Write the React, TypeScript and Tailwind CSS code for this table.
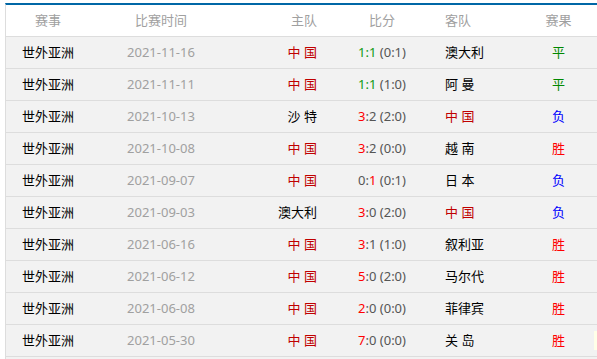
import React from "react";

type Row = {
  date: string;
  home: string;
  hs: string;
  as: string;
  ht: string;
  away: string;
  res: "平" | "负" | "胜";
  win: "h" | "a" | "d";
};

const rows: Row[] = [
  { date: "2021-11-16", home: "中 国", hs: "1", as: "1", ht: "(0:1)", away: "澳大利", res: "平", win: "d" },
  { date: "2021-11-11", home: "中 国", hs: "1", as: "1", ht: "(1:0)", away: "阿 曼", res: "平", win: "d" },
  { date: "2021-10-13", home: "沙 特", hs: "3", as: "2", ht: "(2:0)", away: "中 国", res: "负", win: "h" },
  { date: "2021-10-08", home: "中 国", hs: "3", as: "2", ht: "(0:0)", away: "越 南", res: "胜", win: "h" },
  { date: "2021-09-07", home: "中 国", hs: "0", as: "1", ht: "(0:1)", away: "日 本", res: "负", win: "a" },
  { date: "2021-09-03", home: "澳大利", hs: "3", as: "0", ht: "(2:0)", away: "中 国", res: "负", win: "h" },
  { date: "2021-06-16", home: "中 国", hs: "3", as: "1", ht: "(1:0)", away: "叙利亚", res: "胜", win: "h" },
  { date: "2021-06-12", home: "中 国", hs: "5", as: "0", ht: "(2:0)", away: "马尔代", res: "胜", win: "h" },
  { date: "2021-06-08", home: "中 国", hs: "2", as: "0", ht: "(0:0)", away: "菲律宾", res: "胜", win: "h" },
  { date: "2021-05-30", home: "中 国", hs: "7", as: "0", ht: "(0:0)", away: "关 岛", res: "胜", win: "h" },
];

const font = { fontFamily: '"Noto Sans", "Noto Sans CJK SC", sans-serif' };

function teamClass(name: string) {
  return name === "中 国" ? "text-[#c00000]" : "text-black";
}

function resClass(r: string) {
  if (r === "平") return "text-[#008800]";
  if (r === "负") return "text-[#0000ff]";
  return "text-[#ff0000]";
}

export default function App() {
  return (
    <div className="relative w-[597px] h-[359px] overflow-hidden bg-white text-[13px]" style={font}>
      <div className="mt-[3px] ml-[5px] border-t-2 border-t-[#0067a6] border-l border-l-[#dddddd] bg-[#f2f2f2] h-[360px]">
        <div className="flex h-[32px] items-center border-b border-b-[#dddddd] bg-white text-[#a0a0a0]">
          <div className="w-[84px] text-center">赛事</div>
          <div className="w-[142px] text-center">比赛时间</div>
          <div className="w-[95px] text-right pr-[10px]">主队</div>
          <div className="w-[110px] text-center">比分</div>
          <div className="w-[83px] pl-[8px]">客队</div>
          <div className="flex-1 text-center">赛果</div>
        </div>
        {rows.map((r, i) => (
          <div key={i} className="flex h-[32px] items-center border-b border-b-[#dddddd] bg-[#f2f2f2]">
            <div className="w-[84px] text-center text-black">世外亚洲</div>
            <div className="w-[142px] text-center text-[#a0a0a0]">{r.date}</div>
            <div className={"w-[95px] text-right pr-[10px] " + teamClass(r.home)}>{r.home}</div>
            <div className="w-[110px] text-center text-[#555555]">
              <span className={r.win === "d" ? "text-[#119911]" : r.win === "h" ? "text-[#ff0000]" : ""}>{r.hs}</span>
              <span className={r.win === "d" ? "text-[#119911]" : ""}>:</span>
              <span className={r.win === "d" ? "text-[#119911]" : r.win === "a" ? "text-[#ff0000]" : ""}>{r.as}</span>
              <span> {r.ht}</span>
            </div>
            <div className={"w-[83px] pl-[8px] " + teamClass(r.away)}>{r.away}</div>
            <div className={"flex-1 text-center " + resClass(r.res)}>{r.res}</div>
          </div>
        ))}
      </div>
      <div className="absolute right-0 top-[331px] w-[3px] h-[19px] bg-[#ffffe8]" />
    </div>
  );
}
